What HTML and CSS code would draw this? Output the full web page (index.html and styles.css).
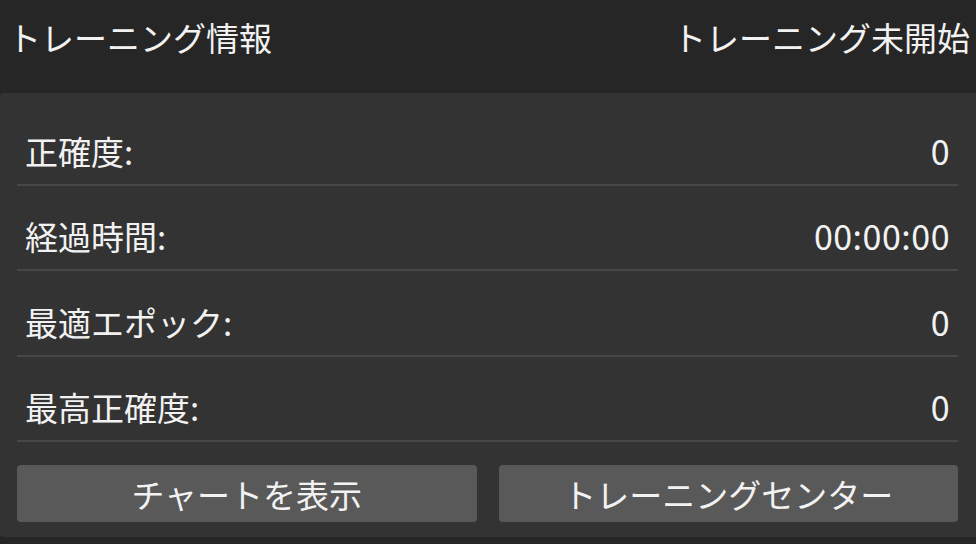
FILE: index.html
```html
<!DOCTYPE html>
<html lang="ja">
<head>
    <meta charset="UTF-8">
    <meta name="viewport" content="width=device-width, initial-scale=1.0">
    <title>トレーニング情報</title>
    <link rel="stylesheet" href="styles.css">
</head>
<body>
    <div class="header">
        <span class="title">トレーニング情報</span>
        <span class="status">トレーニング未開始</span>
    </div>

    <div class="panel">
        <div class="row">
            <span class="label">正確度:</span>
            <span class="value">0</span>
        </div>
        <div class="row">
            <span class="label">経過時間:</span>
            <span class="value">00:00:00</span>
        </div>
        <div class="row">
            <span class="label">最適エポック:</span>
            <span class="value">0</span>
        </div>
        <div class="row">
            <span class="label">最高正確度:</span>
            <span class="value">0</span>
        </div>

        <div class="actions">
            <button class="action-btn">チャートを表示</button>
            <button class="action-btn">トレーニングセンター</button>
        </div>
    </div>
</body>
</html>
```

FILE: styles.css
```css
body {
    margin: 0;
    background-color: #262626;
    color: #f2f2f2;
    font-family: "Noto Sans CJK JP", "Noto Sans", sans-serif;
    font-size: 33px;
}

.header {
    height: 93px;
    display: flex;
    justify-content: space-between;
    align-items: center;
    padding: 0 6px 20px 8px;
    box-sizing: border-box;
}

.panel {
    background-color: #333333;
    border-radius: 4px 0 0 4px;
    padding: 7px 18px 15px 17px;
}

.row {
    height: 85.5px;
    display: flex;
    justify-content: space-between;
    align-items: flex-end;
    padding: 0 8px 16px 8px;
    box-sizing: border-box;
    border-bottom: 2px solid #474747;
    line-height: 34px;
}

.value {
    font-size: 34px;
    letter-spacing: 0.5px;
}

.actions {
    display: flex;
    gap: 22px;
    margin-top: 23px;
}

.action-btn {
    flex: 1;
    height: 57px;
    background-color: #595959;
    color: #f2f2f2;
    border: none;
    border-radius: 4px;
    font-family: inherit;
    font-size: 33px;
    padding: 0;
    cursor: pointer;
}

.action-btn:hover {
    background-color: #666666;
}
```
